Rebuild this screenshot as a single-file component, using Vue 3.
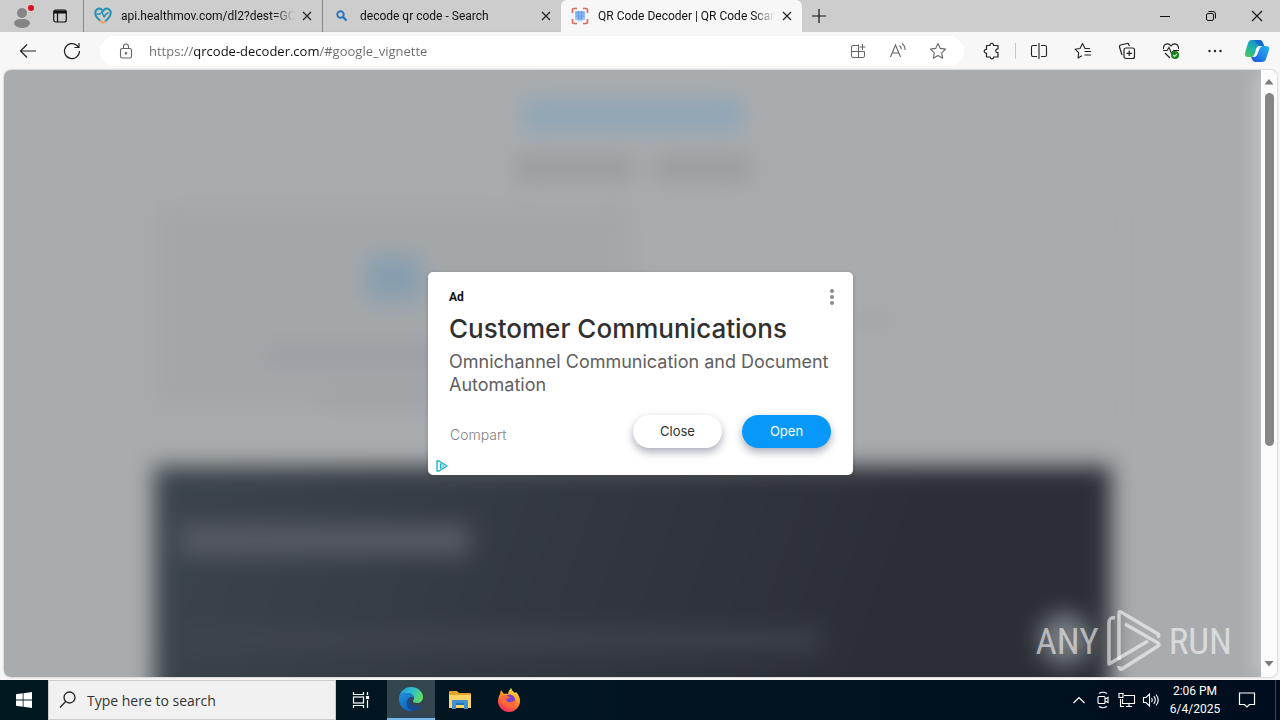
<script setup>
import { ref } from 'vue'

const address = ref('https://qrcode-decoder.com/#google_vignette')
const query = ref('')
const tabs = [
  { id: 'health', title: 'api.healthmov.com/dl2?dest=GC', active: false },
  { id: 'search', title: 'decode qr code - Search', active: false },
  { id: 'qr', title: 'QR Code Decoder | QR Code Scan', active: true },
]
</script>

<template>
  <div class="desktop">
    <header class="tabstrip">
      <button class="profile" aria-label="Profile">
        <svg width="24" height="28" viewBox="0 0 24 28">
          <circle cx="10" cy="11" r="5" fill="#858585" />
          <path d="M2 22c0-4 3-5 8-5s8 1 8 5c-2 3-5 4-8 4s-6-1-8-4z" fill="#858585" />
          <circle cx="19" cy="6" r="3" fill="#e0101b" />
        </svg>
      </button>
      <button class="workspace" aria-label="Tab actions">
        <svg width="16" height="16" viewBox="0 0 16 16" fill="none" stroke="#111">
          <rect x="1.7" y="2" width="12.6" height="12" rx="2" stroke-width="1.2" />
          <path d="M2 4h12" stroke-width="3" /><path d="M5.5 4v10" stroke-width="1.2" />
        </svg>
      </button>
      <nav class="tabs">
        <div v-for="tab in tabs" :key="tab.id" class="tab" :class="{ active: tab.active }">
          <svg v-if="tab.id === 'health'" class="favicon" viewBox="0 0 18 18" fill="none" stroke-linecap="round" stroke-linejoin="round">
            <path d="M9 4C6-.5 1 2 1.300 6.500 1.500 9 3.500 11.500 6 13.500" stroke="#258fb5" stroke-width="2" />
            <path d="M9 4c3-4.500 8-2 7.700 2.500C16.500 9.500 14 12 11 14.500" stroke="#258fb5" stroke-width="2" />
            <path d="M3 7h3l2-2 2 5 2-3 2-1" stroke="#258fb5" stroke-width="1.400" />
            <path d="M6.500 14L9 16l2-1.500" stroke="#e9a06f" stroke-width="2" />
          </svg>
          <svg v-else-if="tab.id === 'search'" class="favicon" viewBox="0 0 18 18" fill="none" stroke="#2a78bd">
            <circle cx="7.500" cy="7.500" r="3.200" stroke-width="1.900" /><path d="M10 10l3.500 3.500" stroke-width="2.400" />
          </svg>
          <svg v-else class="favicon" viewBox="0 0 18 18" fill="none">
            <path d="M1.500 6V3q0-1.500 1.500-1.500h3M12 1.500h3q1.500 0 1.500 1.500v3M16.500 12v3q0 1.500-1.500 1.500h-3M6 16.500H3Q1.500 16.500 1.500 15v-3" stroke="#dd6a62" stroke-width="1.700" />
            <rect x="4" y="4" width="10" height="9" rx="1" fill="#8fbcf5" />
            <path d="M5 6h8M5 9h8M6 11.500h6M7.500 4v9M10.500 4v9" stroke="#5d92e4" stroke-width=".7" />
            <path d="M4 12h3v2h4v-2h3" stroke="#a5c9f7" />
          </svg>
          <span class="tab-title">{{ tab.title }}</span>
          <button class="tab-close" aria-label="Close tab">
            <svg width="10" height="10" viewBox="0 0 10 10" stroke="#222" stroke-width="1.200"><path d="M1 1l8 8M9 1L1 9" /></svg>
          </button>
        </div>
      </nav>
      <button class="newtab" aria-label="New tab">
        <svg width="14" height="14" viewBox="0 0 14 14" stroke="#111" stroke-width="1.200"><path d="M7 0v14M0 7h14" /></svg>
      </button>
      <div class="winbuttons">
        <button aria-label="Minimize"><svg width="12" height="12" viewBox="0 0 12 12" stroke="#111"><path d="M1 6.500h10" /></svg></button>
        <button aria-label="Restore">
          <svg width="12" height="12" viewBox="0 0 12 12" fill="none" stroke="#111"><rect x="1.500" y="3.500" width="7" height="7" rx="1.500" /><path d="M3.500 1.500H8q2.500 0 2.500 2.500v4.500" /></svg>
        </button>
        <button aria-label="Close window"><svg width="12" height="12" viewBox="0 0 12 12" stroke="#111" stroke-width="1.100"><path d="M1 1l10 10M11 1L1 11" /></svg></button>
      </div>
    </header>

    <div class="toolbar">
      <button class="tool" aria-label="Back">
        <svg width="18" height="18" viewBox="0 0 18 18" fill="none" stroke="#222" stroke-width="1.200"><path d="M17 9H1.500M8 2.500L1.500 9 8 15.500" /></svg>
      </button>
      <button class="tool" aria-label="Refresh">
        <svg width="18" height="18" viewBox="0 0 18 18" fill="none" stroke="#222" stroke-width="1.200"><path d="M16.500 9A7.500 7.500 0 1 1 14 3.500L16 5.500M16 1v4.500h-4.500" /></svg>
      </button>
      <div class="omnibox">
        <svg class="lock" width="16" height="18" viewBox="0 0 16 18" fill="none" stroke="#666" stroke-width="1.100"><rect x="2.500" y="6.500" width="11" height="9.500" rx="1.800" /><path d="M5.500 6.500V4.500a2.500 2.500 0 0 1 5 0v2" /><circle cx="8" cy="11.300" r=".7" fill="#666" /></svg>
        <input v-model="address" class="url" type="text" aria-label="Address" spellcheck="false" />
        <button class="tool small" aria-label="Install app">
          <svg width="16" height="16" viewBox="0 0 16 16" fill="none" stroke="#666"><path d="M8.500 2.500H3q-1.500 0-1.500 1.500v9q0 1.500 1.500 1.500h10q1.500 0 1.500-1.500V8.500H1.500M8.500 1.500v13M12.500 1v6M9.500 4h6" /></svg>
        </button>
        <button class="tool small" aria-label="Read aloud">
          <svg width="18" height="18" viewBox="0 0 18 18" fill="none" stroke="#666" stroke-width="1.100"><path d="M1.500 15L6.500 3 11.500 15M3.200 11h6.600M10.500 3.500q2 1.800 1.800 4M13 1.500q3.300 2.500 3 6.500" /></svg>
        </button>
        <button class="tool small" aria-label="Add to favorites">
          <svg width="18" height="18" viewBox="0 0 18 18" fill="none" stroke="#666" stroke-width="1.100" stroke-linejoin="round"><path d="M9 1.500l2.300 4.900 5.200.7-3.800 3.700.9 5.400L9 13.600l-4.600 2.600.9-5.400L1.500 7.100l5.200-.7z" /></svg>
        </button>
      </div>
      <div class="extras">
        <button class="tool" aria-label="Extensions">
          <svg width="18" height="18" viewBox="0 0 18 18" fill="none" stroke="#222" stroke-width="1.200" stroke-linejoin="round"><path d="M3.500 3.500H7c-.5-3 4-3 3.500 0H15V7c-3-.5-3 4 0 3.500v4.500h-4.300c0 2.500-3.500 2.500-3.500 0H3.500v-4C.5 11.500.5 7 3.500 7.500z" /></svg>
        </button>
        <span class="divider"></span>
        <button class="tool" aria-label="Split screen">
          <svg width="18" height="18" viewBox="0 0 18 18" fill="none" stroke="#222" stroke-width="1.100"><path d="M7 3.500H3Q1.500 3.500 1.500 5v8q0 1.500 1.500 1.500h4M11 3.500h4q1.500 0 1.500 1.500v8q0 1.500-1.500 1.500h-4M9 1v16" /></svg>
        </button>
        <button class="tool" aria-label="Favorites">
          <svg width="18" height="18" viewBox="0 0 18 18" fill="none" stroke="#222" stroke-width="1.100"><path d="M16 6.500h-5L8.500 1.500 6 6.500l-5 .7 3.700 3.500L4 16l4-2.200M10.500 9.500H17M10.500 13H17" stroke-linejoin="round" /></svg>
        </button>
        <button class="tool" aria-label="Collections">
          <svg width="18" height="18" viewBox="0 0 18 18" fill="none" stroke="#222" stroke-width="1.200"><rect x="6" y="6" width="10.500" height="10.500" rx="2" /><path d="M4 13l-2.500-8q-.3-1.500 1-2L9 1.500q1.300-.3 1.800 1L11.500 4M11.200 8.500v5.500M8.500 11.300H14" /></svg>
        </button>
        <button class="tool" aria-label="Browser essentials">
          <svg width="18" height="18" viewBox="0 0 18 18" fill="none" stroke="#222" stroke-width="1.100"><path d="M1.500 7C1 1.500 6.500.5 9 4c2.500-3.500 8-2.500 7.500 3M3 11l5 5M1 8.500h4l2-3 2.500 6 2-3H17" /><circle cx="13" cy="13" r="4" fill="#15801c" stroke="none" /><path d="M11 13l1.500 1.500L15 12" stroke="#cde8cd" /></svg>
        </button>
        <button class="tool" aria-label="Settings and more">
          <svg width="18" height="18" viewBox="0 0 18 18" fill="#222"><circle cx="3.500" cy="9" r="1.200" /><circle cx="9" cy="9" r="1.200" /><circle cx="14.500" cy="9" r="1.200" /></svg>
        </button>
        <button class="tool copilot" aria-label="Copilot">
          <svg width="26" height="24" viewBox="0 0 26 24">
            <defs>
              <linearGradient id="cpA" x1="0" y1="1" x2=".7" y2="0"><stop stop-color="#50c94f" /><stop offset=".5" stop-color="#20b4a9" /><stop offset="1" stop-color="#168bd6" /></linearGradient>
              <linearGradient id="cpB" x1="0" y1="1" x2="1" y2="0"><stop stop-color="#1b51d9" /><stop offset="1" stop-color="#25b8f5" /></linearGradient>
            </defs>
            <path d="M7 1h9q2 0 3 3l1 3h-3q-2 0-3 3l-2 6q-1 2-3 2H4q-4 0-3-4L4 4q1-3 3-3z" fill="url(#cpA)" />
            <path d="M10 1h6q2 0 3 3l1 3h-5z" fill="#146bc9" />
            <path d="M20 7h2q4 0 3 4l-3 9q-1 3-4 3h-7q-2 0-3-3l-1-2h3q2 0 3-3l2-5q1-3 3-3z" fill="url(#cpB)" />
            <path d="M15 7h3q-2 1-3 4l-2 5q-1 2-3 2H8q2-1 3-4l1-4q1-3 3-3z" fill="#f7f7f7" />
          </svg>
        </button>
      </div>
    </div>

    <div class="viewport">
      <main class="webpage">
        <div class="backdrop" aria-hidden="true">
          <div class="smudge heading"></div>
          <div class="subtitle"><div class="smudge"></div><div class="smudge"></div></div>
          <div class="panels">
            <div class="panel shaded">
              <div class="smudge icon"></div>
              <div class="smudge line-a"></div>
              <div class="smudge line-b"></div>
            </div>
            <div class="panel"><div class="smudge line-c"></div></div>
          </div>
          <div class="dark">
            <div class="smudge dark-title"></div>
            <div class="smudge dark-text"></div>
          </div>
          <div class="bubble"></div>
        </div>

        <section class="ad" aria-label="Advertisement">
          <div class="ad-top">
            <span class="ad-tag">Ad</span>
            <button class="ad-menu" aria-label="Ad options">
              <svg width="6" height="18" viewBox="0 0 6 18" fill="#8b8b8b"><circle cx="3" cy="3" r="2" /><circle cx="3" cy="9" r="2" /><circle cx="3" cy="15" r="2" /></svg>
            </button>
          </div>
          <h1>Customer Communications</h1>
          <p>Omnichannel Communication and Document Automation</p>
          <div class="ad-actions">
            <span class="brand">Compart</span>
            <button class="pill">Close</button>
            <button class="pill open">Open</button>
          </div>
          <a class="adchoices" href="#adchoices" aria-label="AdChoices">
            <svg width="12" height="12" viewBox="0 0 12 12" fill="none" stroke="#15aecb" stroke-width="1.300" stroke-linejoin="round"><path d="M1 1v10h2l8-5-8-5z" /><path d="M4.500 3.500v5" /><path d="M4.500 3.500L8 6 4.500 8.500" stroke-width=".8" /></svg>
          </a>
        </section>

        <div class="watermark">
          <span>ANY</span>
          <svg width="56" height="62" viewBox="0 0 56 62" fill="none" stroke="currentColor" stroke-width="3.500" stroke-linejoin="round">
            <path d="M9 8Q3 7 3 13V54L42 31" />
            <path d="M13 50V3q0-2 2-1L52 24q2 2-1 3" />
            <path d="M19 14L52 33q2 2 0 3L16 59q-3 1-3-3" />
          </svg>
          <span>RUN</span>
        </div>
      </main>
      <div class="scrollbar" aria-hidden="true">
        <svg width="10" height="6" viewBox="0 0 10 6" fill="#7b7b7b"><path d="M5 0l4.500 5.500h-9z" /></svg>
        <div class="track"><div class="thumb"></div></div>
        <svg width="10" height="6" viewBox="0 0 10 6" fill="#7b7b7b"><path d="M5 5.500L.5 0h9z" /></svg>
      </div>
    </div>

    <footer class="taskbar">
      <button class="start" aria-label="Start">
        <svg width="16" height="16" viewBox="0 0 16 16" fill="#fff"><path d="M0 2.200L6.700 1.300v6.300H0zM7.500 1.200L16 0v7.600H7.500zM0 8.400h6.700v6.300L0 13.800zM7.500 8.400H16V16l-8.500-1.200z" /></svg>
      </button>
      <label class="search">
        <svg width="18" height="18" viewBox="0 0 18 18" fill="none" stroke="#222" stroke-width="1.300"><circle cx="10.500" cy="6.500" r="5.500" /><path d="M6.700 10.500L1 16.500" /></svg>
        <input v-model="query" type="text" placeholder="Type here to search" aria-label="Search" />
      </label>
      <button class="app" aria-label="Task view">
        <svg width="18" height="18" viewBox="0 0 18 18" fill="none" stroke="#fff" stroke-width="1.200"><path d="M1.500 1v2.500h10V1M1.500 17v-2.500h10V17M15.500 1v3M15.500 9v8" /><rect x="1.500" y="6" width="10" height="6" /><rect x="14.500" y="5.500" width="2" height="2" fill="#fff" /></svg>
      </button>
      <button class="app current" aria-label="Microsoft Edge">
        <svg width="26" height="26" viewBox="0 0 26 26">
          <defs>
            <linearGradient id="edA" x1="0" y1=".2" x2="1" y2=".5"><stop stop-color="#2796dc" /><stop offset=".5" stop-color="#2cbfd0" /><stop offset="1" stop-color="#63dc62" /></linearGradient>
            <linearGradient id="edB" x1="0" y1="0" x2=".5" y2="1"><stop stop-color="#1e90df" /><stop offset="1" stop-color="#1265bb" /></linearGradient>
          </defs>
          <path d="M1 12C2 5 7 1 13 1c7 0 12 5 12 10 0 4-3 6-6 6-3 0-4-1-4-2s1-1 1-3c0-3-3-5-7-5-4 0-7 2-8 5z" fill="url(#edA)" />
          <path d="M1 12c1-3 4-5 8-5 4 0 7 2 7 5-1-1-2-1-3-1-3 1-5 4-4 7 1 4 4 6 8 6-8 4-17-3-16-12z" fill="url(#edB)" />
          <path d="M10 13c-2 3-2 8 2 11 5 2 10-1 12-5-3 2-8 2-11-1-2-2-2-4-1-6z" fill="#144b94" />
        </svg>
      </button>
      <button class="app" aria-label="File Explorer">
        <svg width="22" height="20" viewBox="0 0 22 20"><path d="M0 2q0-1 1-1h7l2 2h11q1 0 1 1v14H0z" fill="#e5a52d" /><path d="M0 5h22v13H0z" fill="#fbd566" /><path d="M3 11q0-1 1-1h14q1 0 1 1v8h-4v-4H7v4H3z" fill="#3e91d4" /><path d="M7 13h8v2H7z" fill="#2573b6" /></svg>
      </button>
      <button class="app" aria-label="Firefox">
        <svg width="24" height="24" viewBox="0 0 24 24">
          <defs><linearGradient id="ffx" x1=".8" y1="0" x2=".3" y2="1"><stop stop-color="#fff14e" /><stop offset=".4" stop-color="#ff9c22" /><stop offset="1" stop-color="#f5265d" /></linearGradient></defs>
          <path d="M3 6l1-4 3 4q2-1 4 0 0-3 3-6 1 3 4 5l1-1q4 4 4 9c0 6-5 11-11 11S1 19 1 13q0-4 2-7z" fill="url(#ffx)" />
          <circle cx="12.500" cy="12" r="5.500" fill="#7542d6" />
          <path d="M4 9q3-3 6-1l3 1q-1 2-4 2 1 4 5 3 3 0 5-3c0 5-3 8-7 8s-8-4-8-10z" fill="#ff6b35" />
        </svg>
      </button>
      <div class="tray">
        <button class="tray-icon" aria-label="Show hidden icons"><svg width="14" height="14" viewBox="0 0 14 14" fill="none" stroke="#fff" stroke-width="1.200"><path d="M1.500 10L7 4.500l5.500 5.500" /></svg></button>
        <button class="tray-icon" aria-label="Meet now"><svg width="16" height="18" viewBox="0 0 16 18" fill="none" stroke="#fff" stroke-width="1.100"><rect x="3" y="5.500" width="7" height="7" rx="1" /><path d="M10 8l3-1.500v5L10 10M4 2.500q4-2.500 8 0M4 15.500q4 2.500 8 0" /></svg></button>
        <button class="tray-icon" aria-label="Network"><svg width="18" height="16" viewBox="0 0 18 16" fill="none" stroke="#fff" stroke-width="1.100"><path d="M6 3.500h10.500v8H4.500V7M8 14.500h6M11 11.500v3M2.500 7v7.500H6" /><rect x="1" y="1.500" width="4" height="4" /></svg></button>
        <button class="tray-icon" aria-label="Volume"><svg width="18" height="16" viewBox="0 0 18 16" fill="none" stroke="#fff" stroke-width="1.100"><path d="M1.500 5.500H4l3.500-3.500v12L4 10.500H1.500zM9.500 6q1.500 2 0 4M11.800 4.200q3 3.800 0 7.600M14 2.500q4.500 5.500 0 11" /></svg></button>
      </div>
      <time class="clock" datetime="2025-06-04T14:06"><span>2:06 PM</span><span>6/4/2025</span></time>
      <button class="notify" aria-label="Notifications"><svg width="18" height="18" viewBox="0 0 18 18" fill="none" stroke="#fff" stroke-width="1.200"><path d="M1.500 2h15v11.500h-5L9 16l-2.500-2.500h-5z" /></svg></button>
      <span class="peek"></span>
    </footer>
  </div>
</template>

<style>
body {
  margin: 0;
}
</style>

<style scoped>
* {
  box-sizing: border-box;
}
button {
  border: 0;
  padding: 0;
  background: none;
  font-family: inherit;
  display: grid;
  place-items: center;
  flex: none;
}
.desktop {
  height: 100vh;
  display: flex;
  flex-direction: column;
  overflow: hidden;
  background: #f7f7f7;
  font-family: Roboto, "Open Sans", sans-serif;
  font-size: 12px;
  color: #111;
}
.tabstrip {
  display: flex;
  height: 32px;
  flex: none;
  background: #cdcdcd;
}
.profile {
  width: 48px;
}
.workspace {
  width: 24px;
  margin-right: 11px;
}
.tabs {
  display: flex;
}
.tab {
  width: 239px;
  display: flex;
  align-items: center;
  border-left: 1px solid #888;
  padding: 0 7px 0 10px;
  background: linear-gradient(#cdcdcd 30px, #c2c2c2);
}
.tab.active {
  width: 241px;
  border-left: 0;
  background: #f7f7f7;
  border-radius: 6px 6px 0 0;
}
.favicon {
  width: 18px;
  height: 18px;
  flex: none;
  margin-right: 9px;
}
.tab-title {
  flex: 1;
  white-space: nowrap;
  overflow: hidden;
  mask-image: linear-gradient(90deg, #000 88%, transparent);
}
.tab-close {
  width: 16px;
  height: 16px;
  margin-left: 4px;
}
.newtab {
  width: 34px;
}
.winbuttons {
  display: flex;
  margin-left: auto;
}
.winbuttons button {
  width: 46px;
}
.toolbar {
  height: 38px;
  flex: none;
  display: flex;
  align-items: center;
  padding-left: 6px;
}
.tool {
  width: 44px;
  height: 30px;
}
.omnibox {
  flex: 1;
  height: 30px;
  margin-left: 6px;
  display: flex;
  align-items: center;
  padding: 0 6px 0 18px;
  border-radius: 15px;
  background: #fff;
}
.lock {
  flex: none;
  margin-right: 15px;
}
.url {
  flex: 1;
  min-width: 0;
  border: 0;
  padding: 0;
  outline: 0;
  font: 13px "Open Sans", "Noto Sans", sans-serif;
  color: transparent;
  background: linear-gradient(90deg, #6a6a6a 45px, #111 45px, #111 171px, #6a6a6a 171px);
  background-clip: text;
}
.small {
  width: 40px;
}
.extras {
  display: flex;
  align-items: center;
  padding: 0 3px 0 6px;
}
.divider {
  width: 1px;
  height: 16px;
  margin: 0 1px;
  background: #c8c8c8;
}
.copilot {
  width: 40px;
}
.viewport {
  flex: 1;
  min-height: 0;
  display: flex;
  margin: 0 3px 3px 4px;
  border-radius: 7px;
  overflow: hidden;
  box-shadow: 0 0 2px #999;
}
.webpage {
  flex: 1;
  min-width: 0;
  display: grid;
  place-items: center;
  padding-left: 16px;
  position: relative;
  overflow: hidden;
  background: #a8acaf;
}
.backdrop {
  position: absolute;
  inset: 0;
  padding: 28px 150px 0;
  display: flex;
  flex-direction: column;
  align-items: center;
  filter: blur(11px);
  box-shadow: 8px 0 0 #e8ebed;
}
.smudge {
  flex: none;
}
.heading {
  width: 220px;
  height: 34px;
  background: #90a6b6;
}
.subtitle {
  display: flex;
  gap: 20px;
  margin-top: 24px;
}
.subtitle .smudge {
  width: 120px;
  height: 24px;
  background: #999b9e;
}
.subtitle .smudge + .smudge {
  width: 95px;
}
.panels {
  align-self: stretch;
  height: 224px;
  flex: none;
  margin-top: 24px;
  display: grid;
  grid-template-columns: 1fr 1fr;
  border: 2px solid #a4a8ab;
}
.panel {
  display: flex;
  flex-direction: column;
  align-items: center;
}
.shaded {
  background: #a3a7aa;
  margin-bottom: 16px;
}
.icon {
  width: 54px;
  height: 44px;
  margin-top: 50px;
  background: #869eaf;
}
.line-a {
  width: 260px;
  height: 18px;
  margin-top: 48px;
  background: #9b9fa6;
}
.line-b {
  width: 140px;
  height: 16px;
  margin-top: 24px;
  background: #9ea1a5;
}
.line-c {
  align-self: flex-start;
  width: 100px;
  height: 14px;
  margin: 106px 0 0 160px;
  background: #a1a5a8;
}
.dark {
  align-self: stretch;
  flex: 1;
  margin: 38px 0 -30px;
  background: linear-gradient(110deg, #3c454c, #32373e 45%, #2b2e36 75%);
  padding: 58px 26px 0;
}
.dark-title {
  width: 290px;
  height: 32px;
  background: #555a60;
}
.dark-text {
  width: 640px;
  height: 20px;
  margin-top: 74px;
  background: #3e444a;
}
.bubble {
  position: absolute;
  right: 170px;
  bottom: 12px;
  width: 52px;
  height: 52px;
  border-radius: 50%;
  background: #777c82;
}
.ad {
  position: relative;
  width: 425px;
  padding: 16px 18px 27px 21px;
  border-radius: 5px;
  background: #fff;
  font-family: Inter, Roboto, sans-serif;
  box-shadow: 0 1px 4px #0003;
}
.ad-top {
  display: flex;
  justify-content: space-between;
  align-items: center;
}
.ad-tag {
  font: bold 12px/18px Roboto, sans-serif;
}
h1 {
  margin: 6px 0 4px;
  font-size: 26px;
  line-height: 34px;
  font-weight: 500;
  color: #303030;
  white-space: nowrap;
}
p {
  margin: 0 -10px 0 0;
  font-size: 18px;
  line-height: 23px;
  color: #606060;
}
.ad-actions {
  display: flex;
  align-items: center;
  gap: 20px;
  margin: 19px 4px 0 1px;
}
.brand {
  margin-right: auto;
  padding-top: 5px;
  font-size: 14px;
  font-weight: 300;
  color: #808080;
}
.pill {
  width: 89px;
  height: 33px;
  padding-bottom: 2px;
  border-radius: 17px;
  background: #fff;
  color: #333;
  font-size: 13px;
  box-shadow: 0 4px 8px #27304a66;
}
.open {
  background: #0798f9;
  color: #fff;
}
.adchoices {
  position: absolute;
  left: 8px;
  bottom: 3px;
  line-height: 0;
}
.watermark {
  position: absolute;
  right: 29px;
  bottom: 5px;
  display: flex;
  align-items: center;
  gap: 7px;
  font: 37px "Liberation Sans Narrow", "Roboto Condensed", "Liberation Sans", sans-serif;
  color: #ffffff90;
}
.scrollbar {
  width: 16px;
  flex: none;
  background: #fcfcfc;
  display: flex;
  flex-direction: column;
  align-items: center;
  padding: 9px 0 10px;
}
.track {
  flex: 1;
  padding: 8px 0;
}
.thumb {
  width: 9px;
  height: 63%;
  border-radius: 5px;
  background: #868686;
}
.taskbar {
  height: 40px;
  flex: none;
  display: flex;
  background: linear-gradient(90deg, #001820, #021522 45%, #000d1e);
  color: #fff;
}
.start {
  width: 48px;
}
.search {
  width: 288px;
  display: flex;
  align-items: center;
  gap: 10px;
  padding-left: 10px;
  background: #f1f1f1;
  border: 1px solid #ccc;
}
.search input {
  flex: 1;
  min-width: 0;
  border: 0;
  padding: 0;
  outline: 0;
  background: none;
  font: 14px "Open Sans", "Noto Sans", sans-serif;
}
.search input::placeholder {
  color: #333;
}
.app {
  width: 48px;
  margin-left: 1px;
}
.current {
  margin-left: 2px;
  background: #334650;
  border-bottom: 2px solid #76b9ed;
}
.tray {
  display: flex;
  margin-left: auto;
}
.tray-icon {
  width: 24px;
}
.clock {
  width: 64px;
  display: flex;
  flex-direction: column;
  align-items: center;
  justify-content: center;
  line-height: 18px;
}
.notify {
  width: 40px;
  margin-right: 8px;
}
.peek {
  width: 5px;
  border-left: 1px solid #3c4854;
}
</style>
